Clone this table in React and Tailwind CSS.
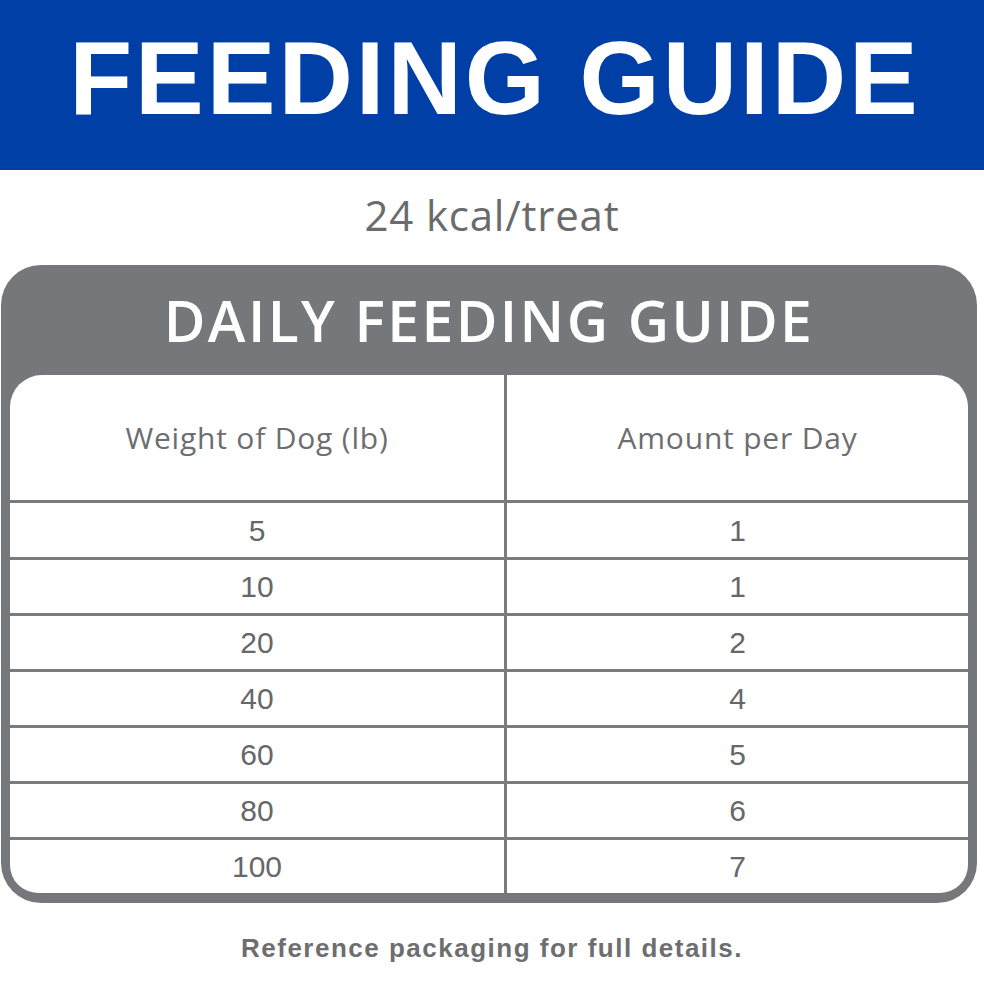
export default function App() {
  const rows = [
    ["5", "1"],
    ["10", "1"],
    ["20", "2"],
    ["40", "4"],
    ["60", "5"],
    ["80", "6"],
    ["100", "7"],
  ];
  return (
    <div className="w-[984px] h-[982px] bg-white overflow-hidden">
      <div className="h-[170px] bg-[#0040a6] flex items-center justify-center">
        <h1
          className="text-white font-bold text-[103px] leading-none tracking-[3px] mt-[-14px] ml-[6px]"
          style={{ fontFamily: '"Liberation Sans", Arial, sans-serif' }}
        >
          FEEDING GUIDE
        </h1>
      </div>
      <div
        className="h-[95px] flex items-center justify-center text-[42px] tracking-[0.8px] text-[#6a6b6d] pb-[6px]"
        style={{ fontFamily: '"Open Sans", sans-serif' }}
      >
        24 kcal/treat
      </div>
      <div className="ml-[1px] w-[976px] bg-[#76777a] rounded-[40px] px-[9px] pb-[10px]">
        <div
          className="h-[110px] flex items-center justify-center text-white font-semibold text-[57px] tracking-[2.4px] pt-[2px]"
          style={{ fontFamily: '"Open Sans", sans-serif' }}
        >
          DAILY FEEDING GUIDE
        </div>
        <div className="bg-white rounded-t-[32px] rounded-b-[28px] overflow-hidden">
          <div
            className="flex h-[125px] text-[30px] tracking-[0.8px] text-[#6d6e70]"
            style={{ fontFamily: '"Open Sans", sans-serif' }}
          >
            <div className="w-[497px] border-r-[3px] border-[#7a7b7e] flex items-center justify-center">
              Weight of Dog (lb)
            </div>
            <div className="flex-1 flex items-center justify-center">Amount per Day</div>
          </div>
          {rows.map(([w, a], i) => (
            <div
              key={i}
              className={`flex border-t-[3px] border-[#7a7b7e] text-[30px] text-[#666769] ${
                i === 0 ? "h-[57px]" : "h-[56px]"
              }`}
              style={{ fontFamily: '"Liberation Sans", Arial, sans-serif' }}
            >
              <div className="w-[497px] border-r-[3px] border-[#7a7b7e] flex items-center justify-center">
                {w}
              </div>
              <div className="flex-1 flex items-center justify-center">{a}</div>
            </div>
          ))}
        </div>
      </div>
      <div
        className="mt-[26px] text-center font-bold text-[26px] text-[#6d6e70] tracking-[1.5px]"
        style={{ fontFamily: '"Liberation Sans", Arial, sans-serif' }}
      >
        Reference packaging for full details.
      </div>
    </div>
  );
}
